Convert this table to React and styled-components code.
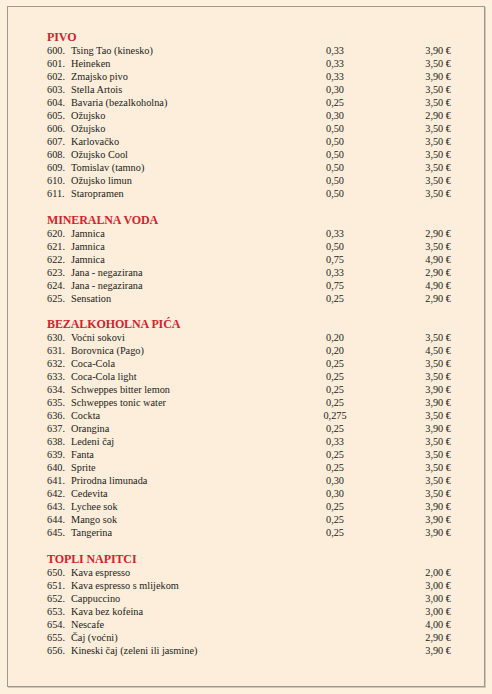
import React from 'react';
import styled, { createGlobalStyle } from 'styled-components';

const sections = [
    {
        title: 'PIVO',
        items: [
            ['600.', 'Tsing Tao (kinesko)', '0,33', '3,90 €'],
            ['601.', 'Heineken', '0,33', '3,50 €'],
            ['602.', 'Zmajsko pivo', '0,33', '3,90 €'],
            ['603.', 'Stella Artois', '0,30', '3,50 €'],
            ['604.', 'Bavaria (bezalkoholna)', '0,25', '3,50 €'],
            ['605.', 'Ožujsko', '0,30', '2,90 €'],
            ['606.', 'Ožujsko', '0,50', '3,50 €'],
            ['607.', 'Karlovačko', '0,50', '3,50 €'],
            ['608.', 'Ožujsko Cool', '0,50', '3,50 €'],
            ['609.', 'Tomislav (tamno)', '0,50', '3,50 €'],
            ['610.', 'Ožujsko limun', '0,50', '3,50 €'],
            ['611.', 'Staropramen', '0,50', '3,50 €'],
        ],
    },
    {
        title: 'MINERALNA VODA',
        items: [
            ['620.', 'Jamnica', '0,33', '2,90 €'],
            ['621.', 'Jamnica', '0,50', '3,50 €'],
            ['622.', 'Jamnica', '0,75', '4,90 €'],
            ['623.', 'Jana - negazirana', '0,33', '2,90 €'],
            ['624.', 'Jana - negazirana', '0,75', '4,90 €'],
            ['625.', 'Sensation', '0,25', '2,90 €'],
        ],
    },
    {
        title: 'BEZALKOHOLNA PIĆA',
        items: [
            ['630.', 'Voćni sokovi', '0,20', '3,50 €'],
            ['631.', 'Borovnica (Pago)', '0,20', '4,50 €'],
            ['632.', 'Coca-Cola', '0,25', '3,50 €'],
            ['633.', 'Coca-Cola light', '0,25', '3,50 €'],
            ['634.', 'Schweppes bitter lemon', '0,25', '3,90 €'],
            ['635.', 'Schweppes tonic water', '0,25', '3,90 €'],
            ['636.', 'Cockta', '0,275', '3,50 €'],
            ['637.', 'Orangina', '0,25', '3,90 €'],
            ['638.', 'Ledeni čaj', '0,33', '3,50 €'],
            ['639.', 'Fanta', '0,25', '3,50 €'],
            ['640.', 'Sprite', '0,25', '3,50 €'],
            ['641.', 'Prirodna limunada', '0,30', '3,50 €'],
            ['642.', 'Cedevita', '0,30', '3,50 €'],
            ['643.', 'Lychee sok', '0,25', '3,90 €'],
            ['644.', 'Mango sok', '0,25', '3,90 €'],
            ['645.', 'Tangerina', '0,25', '3,90 €'],
        ],
    },
    {
        title: 'TOPLI NAPITCI',
        items: [
            ['650.', 'Kava espresso', '', '2,00 €'],
            ['651.', 'Kava espresso s mlijekom', '', '3,00 €'],
            ['652.', 'Cappuccino', '', '3,00 €'],
            ['653.', 'Kava bez kofeina', '', '3,00 €'],
            ['654.', 'Nescafe', '', '4,00 €'],
            ['655.', 'Čaj (voćni)', '', '2,90 €'],
            ['656.', 'Kineski čaj (zeleni ili jasmine)', '', '3,90 €'],
        ],
    },
];

const App = () => {
    return (
        <>
            <GlobalStyle />
            <Page>
                <Frame>
                    {sections.map((s) => (
                        <Section key={s.title}>
                            <Title>{s.title}</Title>
                            {s.items.map(([num, name, vol, price]) => (
                                <Row key={num}>
                                    <Num>{num}</Num>
                                    <Name>{name}</Name>
                                    <Volume>{vol}</Volume>
                                    <Price>{price}</Price>
                                </Row>
                            ))}
                        </Section>
                    ))}
                </Frame>
            </Page>
        </>
    );
};

export default App;

const GlobalStyle = createGlobalStyle`
    html, body {
        margin: 0;
        padding: 0;
        background: #fdf0dd;
    }
`;

const Page = styled.div`
    width: 492px;
    height: 694px;
    box-sizing: border-box;
    padding: 6px 7px 7px 7px;
    background: #fdf0dd;
`;

const Frame = styled.div`
    height: 100%;
    box-sizing: border-box;
    border: 1px solid #9e988f;
    box-shadow: 1px 1px 0 #cfc7ba;
    background: #fdeedb;
    padding: 23px 33px 0 39px;
    font-family: "Liberation Serif", "DejaVu Serif", serif;
    color: #221c19;
`;

const Section = styled.section`
    margin-bottom: 12.5px;
`;

const Title = styled.h2`
    margin: 0;
    font-size: 12px;
    line-height: 14px;
    font-weight: bold;
    color: #d2222b;
    letter-spacing: -0.1px;
`;

const Row = styled.div`
    display: grid;
    grid-template-columns: 24px 239px 50px 91px;
    font-size: 10.3px;
    line-height: 13px;
    height: 13px;
`;

const Num = styled.span``;

const Name = styled.span`
    white-space: nowrap;
`;

const Volume = styled.span`
    text-align: center;
`;

const Price = styled.span`
    text-align: right;
`;
